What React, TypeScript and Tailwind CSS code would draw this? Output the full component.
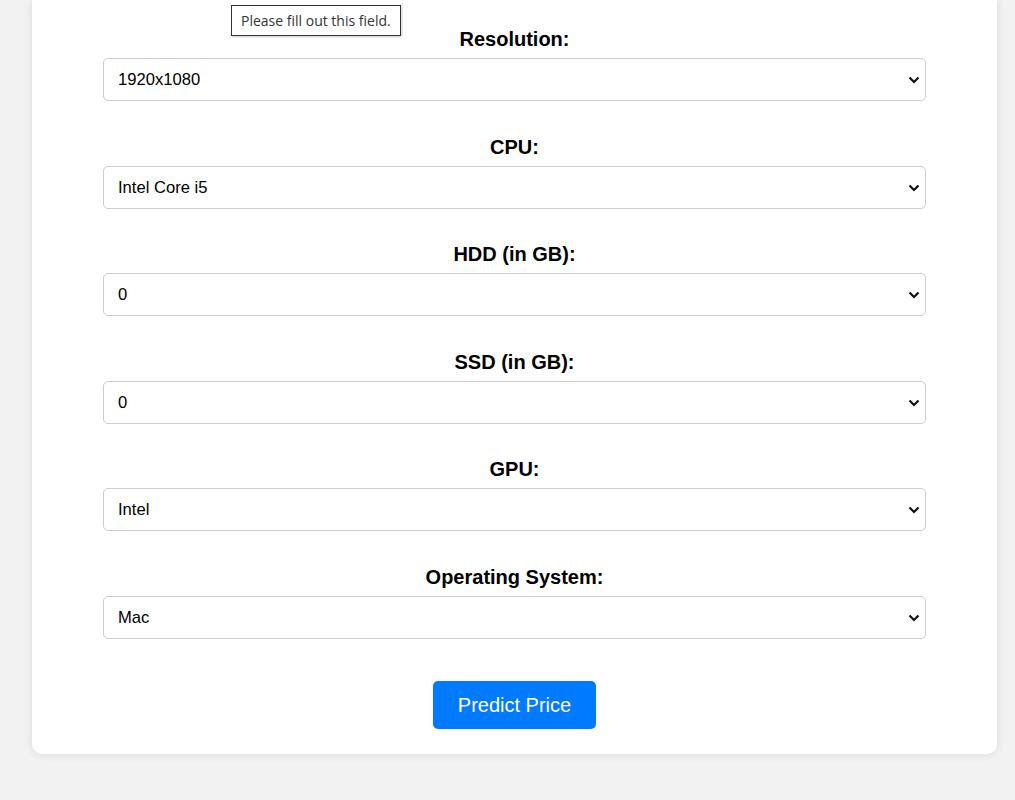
import { useState } from "react";

const fields: { label: string; value: string; options: string[] }[] = [
  { label: "Resolution:", value: "1920x1080", options: ["1920x1080", "1366x768", "1600x900", "2560x1440", "3840x2160"] },
  { label: "CPU:", value: "Intel Core i5", options: ["Intel Core i3", "Intel Core i5", "Intel Core i7", "AMD Processor", "Other"] },
  { label: "HDD (in GB):", value: "0", options: ["0", "128", "256", "512", "1024", "2048"] },
  { label: "SSD (in GB):", value: "0", options: ["0", "8", "128", "256", "512", "1024"] },
  { label: "GPU:", value: "Intel", options: ["Intel", "AMD", "Nvidia"] },
  { label: "Operating System:", value: "Mac", options: ["Mac", "Windows", "Linux", "Others"] },
];

function Field({ label, value, options }: { label: string; value: string; options: string[] }) {
  const [v, setV] = useState(value);
  return (
    <div className="flex flex-col mb-[33.6px]">
      <label className="text-center text-[20px] leading-[23px] font-bold text-black pt-px mb-[7px]">{label}</label>
      <div className="relative">
        <select
          value={v}
          onChange={(e) => setV(e.target.value)}
          className="appearance-none h-[43px] w-full border border-[#ccc] rounded-[5px] bg-white pl-[14px] pr-8 pt-[2px] text-[16.6px] text-black outline-none"
        >
          {options.map((o) => (
            <option key={o} value={o}>{o}</option>
          ))}
        </select>
        <svg className="pointer-events-none absolute right-[6px] top-[18px]" width="12" height="8" viewBox="0 0 12 8">
          <path d="M1.5 1.5 L6 6 L10.5 1.5" fill="none" stroke="#111" strokeWidth="2.2" />
        </svg>
      </div>
    </div>
  );
}

export default function App() {
  return (
    <div className="min-h-screen bg-[#f2f2f2] pl-[32px] pr-[18px] font-['Liberation_Sans',Arial,sans-serif]">
      <div className="relative bg-white rounded-b-[10px] shadow-[0_0_10px_rgba(0,0,0,0.1)] px-[71px] pt-[27px] pb-[25px]">
        <div className="absolute left-[199px] top-[5px] z-10 border border-[#333] bg-white px-[9px] h-[31px] flex items-center text-[14px] text-[#333] font-['Open_Sans','Noto_Sans',sans-serif] shadow-[1px_1px_2px_rgba(0,0,0,0.2)]">
          Please fill out this field.
        </div>
        {fields.map((f) => (
          <Field key={f.label} {...f} />
        ))}
        <div className="flex justify-center mt-[42px]">
          <button className="w-[163px] h-[48px] bg-[#007bff] text-white text-[20px] rounded-[5px]">
            Predict Price
          </button>
        </div>
      </div>
    </div>
  );
}
